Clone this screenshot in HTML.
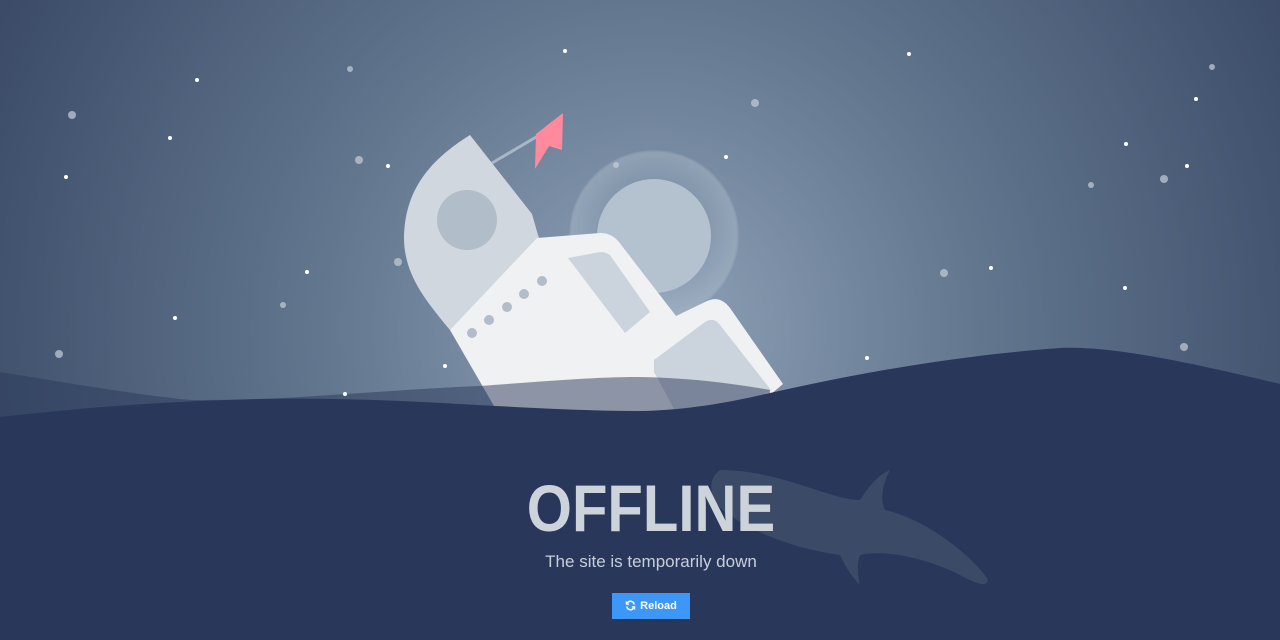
<!DOCTYPE html>
<html><head><meta charset="utf-8"><style>
html,body{margin:0;padding:0;width:1280px;height:640px;overflow:hidden;background:#29375a;font-family:"Liberation Sans",sans-serif}
svg{position:absolute;left:0;top:0}
.t{position:absolute;left:0;width:1280px;text-align:center}
</style></head><body>
<svg width="1280" height="640" viewBox="0 0 1280 640">
<defs>
<radialGradient id="bg" cx="650" cy="330" r="720" gradientUnits="userSpaceOnUse">
<stop offset="0" stop-color="#8fa2b8"/><stop offset="0.45" stop-color="#63778f"/><stop offset="1" stop-color="#3b4b68"/>
</radialGradient>
<radialGradient id="glow" cx="0.5" cy="0.5" r="0.5">
<stop offset="0.6" stop-color="#c0ccd8" stop-opacity="0.08"/><stop offset="0.97" stop-color="#c0ccd8" stop-opacity="0.35"/><stop offset="1" stop-color="#c0ccd8" stop-opacity="0.1"/>
</radialGradient>
</defs>
<rect width="1280" height="640" fill="url(#bg)"/>
<circle cx="654" cy="235" r="85" fill="url(#glow)"/>
<circle cx="654" cy="236" r="57" fill="#b4c1ce"/>
<!-- ship -->
<g>
<line x1="492" y1="163" x2="548" y2="130" stroke="#a8b6c8" stroke-width="3"/>
<path d="M536 134 L563 113 L562 150 L549 146 L535 169Z" fill="#ff8a9e"/>
<path d="M470 135 L532 214 L538 235 L548 262 L450 330 C425 300 405 275 404 240 C404 190 430 160 470 135Z" fill="#d0d7de"/>
<circle cx="467" cy="220" r="30" fill="#b1bdc9"/>
<path d="M537 238 L600 233 C612 233 618 240 622 246 L676 316 L705 302 C716 296 724 300 730 308 L783 384 L740 420 L505 425 L450 330Z" fill="#f0f1f3"/>
<path d="M568 258 L600 252 C606 252 610 254 612 258 L650 312 L625 333 L568 258Z" fill="#cbd3dc"/>
<path d="M654 360 L705 322 C712 318 716 320 720 325 L771 390 L720 420 L680 420 L654 372Z" fill="#cbd3dc"/>
<g fill="#b1bdc9"><circle cx="472" cy="333" r="5"/><circle cx="489" cy="320" r="5"/><circle cx="507" cy="307" r="5"/><circle cx="524" cy="294" r="5"/><circle cx="542" cy="281" r="5"/></g>
</g>
<!-- translucent wave A -->
<path d="M0 372 C80 385 140 395 190 400 C230 400 270 399 300 397 C380 392 430 388 480 386 C560 380 600 377 640 377 C690 378 730 383 770 390 L770 640 L0 640Z" fill="#29375a" opacity="0.5"/>
<!-- opaque wave B -->
<path d="M0 417 C90 407 170 401 260 399 C400 396 520 411 640 411 C690 410 730 402 770 393 C850 375 950 356 1060 348 C1110 346 1180 360 1280 384 L1280 640 L0 640Z" fill="#29375a"/>
<!-- whale -->
<path d="M720 470 C780 470 830 500 860 500 C870 485 878 475 890 470 C882 485 880 500 885 510 C930 520 975 560 987 578 C990 588 978 585 960 575 C920 555 880 550 860 555 C855 570 860 585 860 585 C850 575 845 565 840 555 C790 548 750 530 730 515 C710 505 705 480 720 470Z" fill="#3c4c68" opacity="0.9"/>
<!-- stars -->
<g fill="#fff">
<circle cx="565" cy="51" r="2"/><circle cx="909" cy="54" r="2"/><circle cx="197" cy="80" r="2"/><circle cx="1196" cy="99" r="2"/><circle cx="170" cy="138" r="2"/><circle cx="1126" cy="144" r="2"/><circle cx="726" cy="157" r="2"/><circle cx="388" cy="166" r="2"/><circle cx="1187" cy="166" r="2"/><circle cx="66" cy="177" r="2"/><circle cx="991" cy="268" r="2"/><circle cx="307" cy="272" r="2"/><circle cx="1125" cy="288" r="2"/><circle cx="175" cy="318" r="2"/><circle cx="867" cy="358" r="2"/><circle cx="445" cy="366" r="2"/><circle cx="345" cy="394" r="2"/>
</g>
<g fill="#c6ced8" opacity="0.7">
<circle cx="350" cy="69" r="3"/><circle cx="1212" cy="67" r="3"/><circle cx="72" cy="115" r="4"/><circle cx="755" cy="103" r="4"/><circle cx="359" cy="160" r="4"/><circle cx="1164" cy="179" r="4"/><circle cx="1091" cy="185" r="3"/><circle cx="616" cy="165" r="3"/><circle cx="398" cy="262" r="4"/><circle cx="944" cy="273" r="4"/><circle cx="283" cy="305" r="3"/><circle cx="59" cy="354" r="4"/><circle cx="1184" cy="347" r="4"/>
</g>
</svg>
<div class="t" style="top:470px;font-size:66px;font-weight:bold;color:#cdd3da;transform:scaleX(0.88);left:11px">OFFLINE</div>
<div class="t" style="top:552px;font-size:17px;color:#c8cfd9;left:11px">The site is temporarily down</div>
<div style="position:absolute;left:612px;top:593px;width:78px;height:26px;background:#3d97f6;color:#fff;font-size:11px;font-weight:bold;line-height:26px;text-align:center">
<svg style="position:relative;vertical-align:middle;margin-right:4px;top:-1px" width="11" height="11" viewBox="0 0 12 12"><path d="M10 5A4 4 0 0 0 2.5 3.5M2 7a4 4 0 0 0 7.5 1.5" fill="none" stroke="#fff" stroke-width="1.6"/><path d="M1.5 1.5v3h3M10.5 10.5v-3h-3" fill="none" stroke="#fff" stroke-width="1.4"/></svg>Reload</div>
</body></html>
